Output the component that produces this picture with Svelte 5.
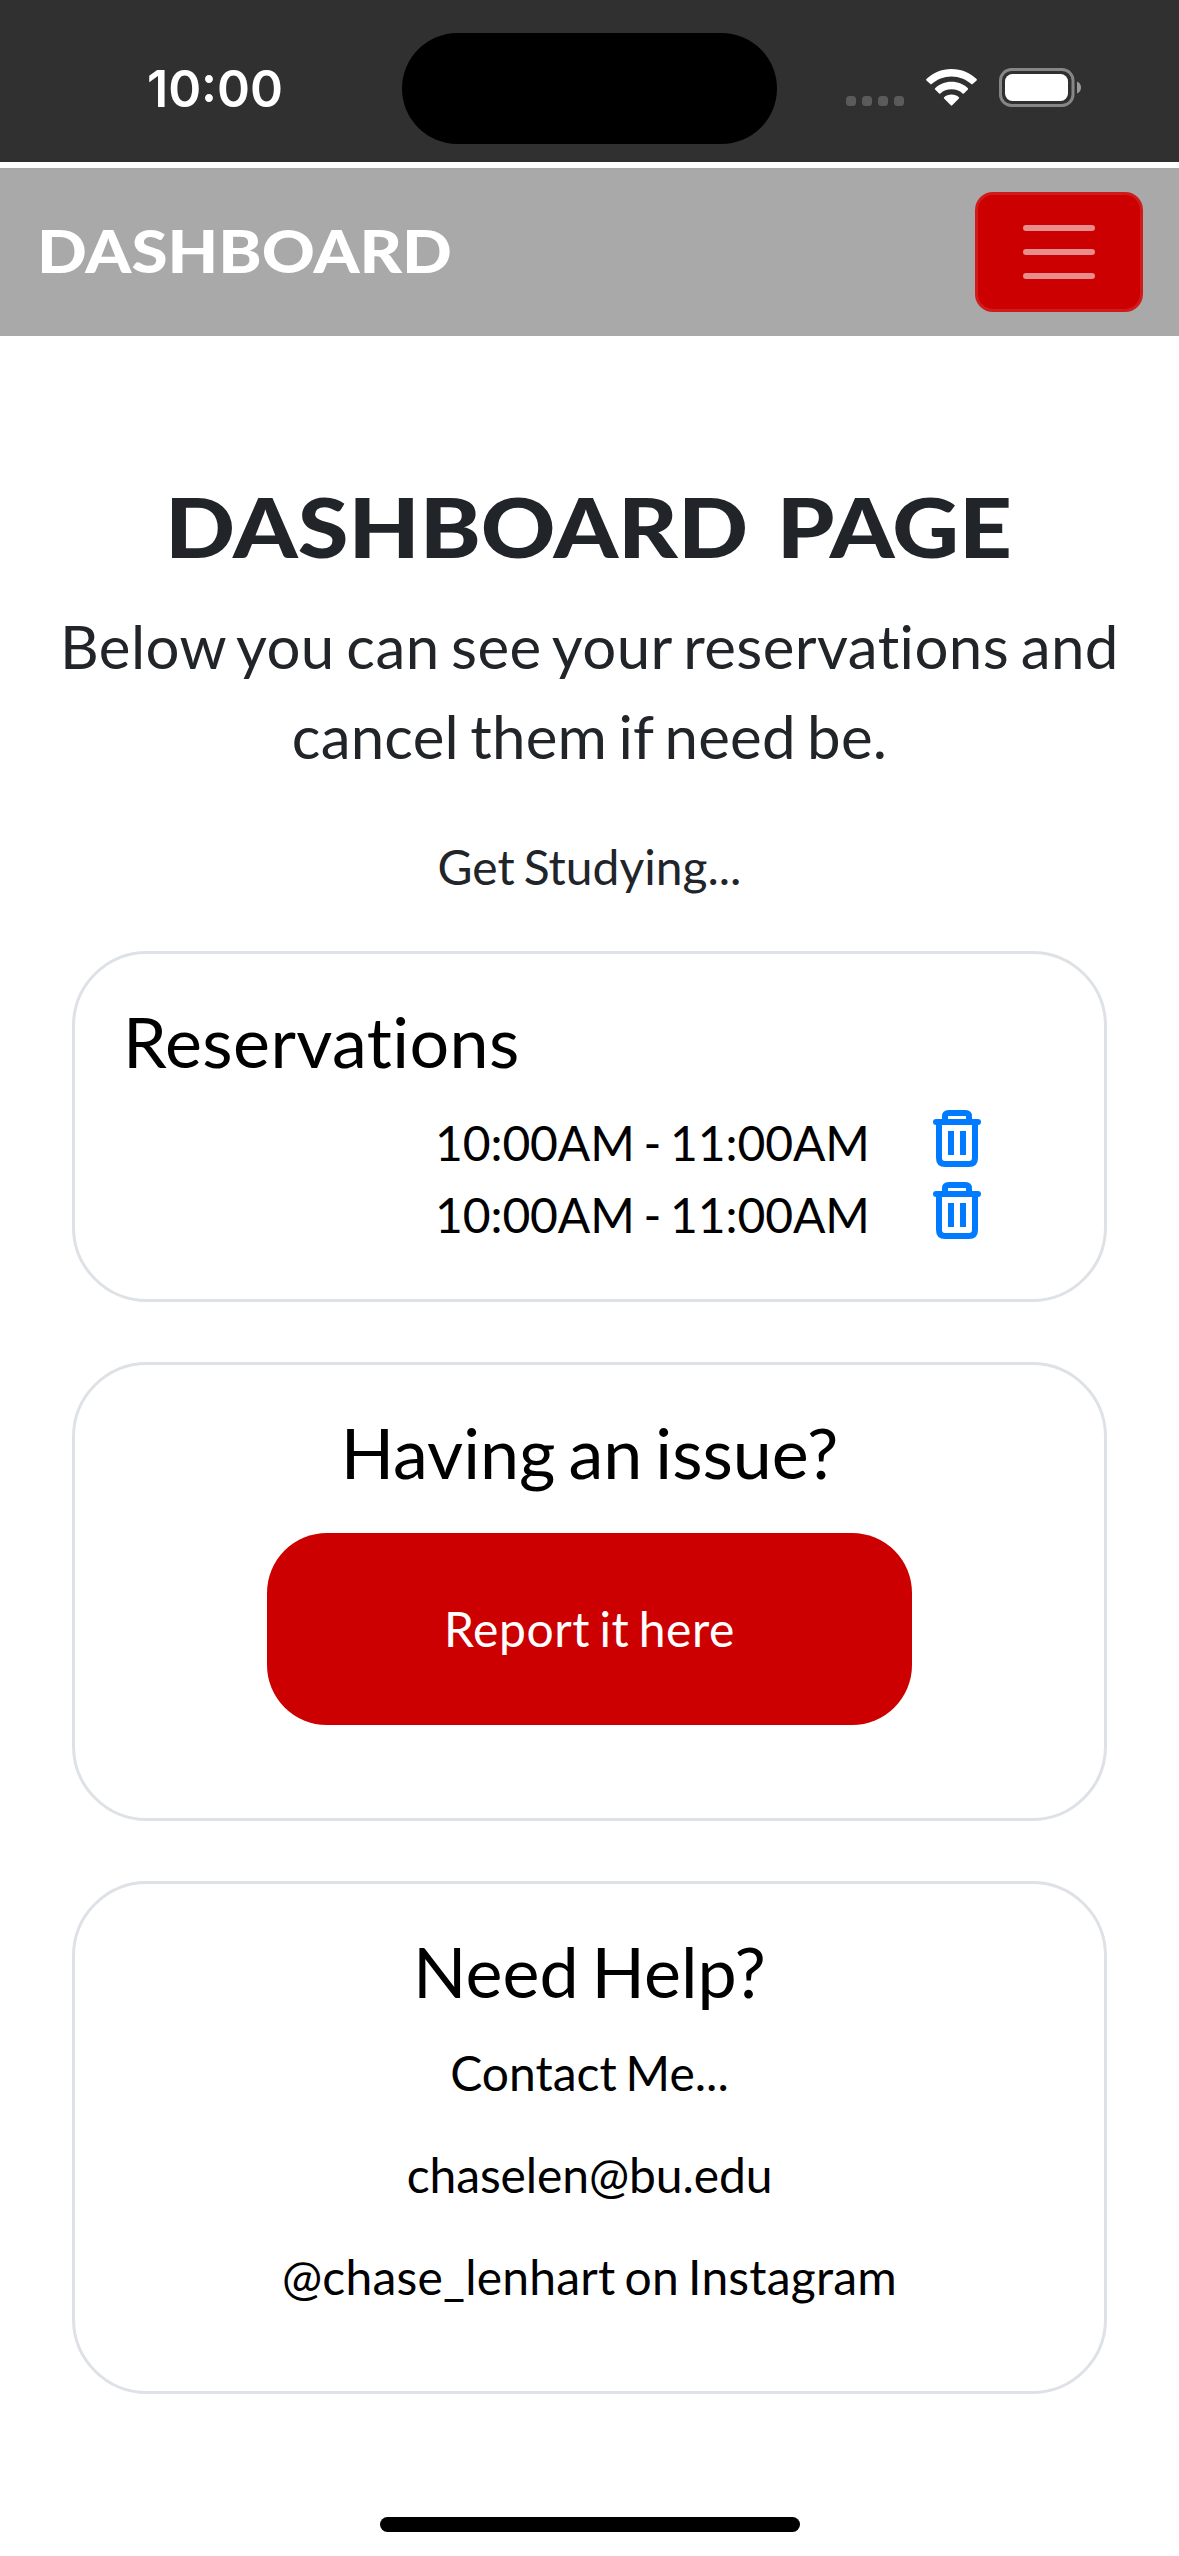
<script>
  const reservations = ['10:00AM - 11:00AM', '10:00AM - 11:00AM'];
  const contacts = [
    { text: 'Contact Me...', kind: 'note' },
    { text: 'chaselen@bu.edu', kind: 'email' },
    { text: '@chase_lenhart on Instagram', kind: 'social' },
  ];
</script>

<div class="screen">
  <header class="status">
    <span class="time">
      <svg width="134" height="60" viewBox="0 0 134 60">
        <text class="clock" x="-1" y="48.500" textLength="136" lengthAdjust="spacingAndGlyphs">10:00</text>
      </svg>
    </span>
    <div class="island"></div>
    <div class="indicators">
      <div class="dots"><i></i><i></i><i></i><i></i></div>
      <svg class="wifi" width="51" height="37" viewBox="0 0 51 37">
        <path d="M25.5 0C35.5 0 44.5 4 50.6 10.1Q51.2 10.8 50.6 11.4L46.6 15.1Q46 15.7 45.4 15.1C40 10.2 33 7.4 25.5 7.4S11 10.2 5.6 15.1Q5 15.7 4.4 15.1L.4 11.4Q-.2 10.8.4 10.1C6.500 4 15.500 0 25.500 0Z" />
        <path d="M25.500 12.800C32 12.800 37.800 15.300 41.900 19.200Q42.500 19.900 41.900 20.500L37.900 24.400Q37.300 25 36.600 24.400C33.600 21.800 29.800 20.300 25.500 20.300S17.400 21.800 14.400 24.400Q13.700 25 13.100 24.400L9.100 20.500Q8.500 19.900 9.100 19.200C13.200 15.300 19 12.800 25.500 12.800Z" />
        <path d="M25.500 25.600C28.400 25.600 31 26.600 32.900 28.300Q33.500 28.900 32.900 29.500L26.200 36.300Q25.500 37 24.800 36.300L18.100 29.500Q17.500 28.900 18.100 28.300C20 26.600 22.600 25.600 25.500 25.600Z" />
      </svg>
      <svg class="battery" width="83" height="39" viewBox="0 0 83 39">
        <rect x="1.500" y="1.500" width="72.500" height="36" rx="11" fill="none" stroke="#868686" stroke-width="3" />
        <rect x="6" y="6" width="63" height="27" rx="7.500" fill="#fff" />
        <path d="M78 13.500C80.500 14.500 82 16.700 82 19.500S80.500 24.500 78 25.500Z" fill="#9a9a9a" />
      </svg>
    </div>
  </header>

  <nav>
    <svg width="412" height="60" viewBox="0 0 412 60">
      <text class="brand" x="-4" y="51" textLength="415" lengthAdjust="spacingAndGlyphs">DASHBOARD</text>
    </svg>
    <button class="toggler" aria-label="Toggle navigation"><i></i><i></i><i></i></button>
  </nav>

  <main>
    <h1>
      <svg width="840" height="100" viewBox="0 0 840 100">
        <text class="title" x="-5" y="83" textLength="847" lengthAdjust="spacingAndGlyphs">DASHBOARD PAGE</text>
      </svg>
    </h1>
    <p class="lead"><span class="wide">Below you can see your reservations and</span><br />cancel them if need be.</p>
    <p class="tagline">Get Studying...</p>

    <section class="card first">
      <h2 class="left">Reservations</h2>
      <ul>
        {#each reservations as slot}
          <li>
            <span>{slot}</span>
            <svg width="48" height="57" viewBox="0 0 48 57" fill="none" stroke="#007bff" stroke-width="6">
              <path d="M12 12V6.500Q12 3 15.500 3H32.500Q36 3 36 6.500V12" />
              <path d="M3 12H45" stroke-linecap="round" />
              <path d="M6 12V48Q6 54 12 54H36Q42 54 42 48V12" />
              <path d="M18 21V45M30 21V45" />
            </svg>
          </li>
        {/each}
      </ul>
    </section>

    <section class="card second">
      <h2>Having an issue?</h2>
      <button class="report">Report it here</button>
    </section>

    <section class="card third">
      <h2>Need Help?</h2>
      {#each contacts as line}
        <p class={line.kind}>{line.text}</p>
      {/each}
    </section>
  </main>

  <div class="home"></div>
</div>

<style>
  :global(body) {
    margin: 0;
    background: #fff;
  }
  .screen {
    box-sizing: border-box;
    width: 1179px;
    height: 2556px;
    display: flex;
    flex-direction: column;
    overflow: hidden;
    background: #fff;
    color: #212529;
    font-family: Lato, 'Liberation Sans', sans-serif;
    font-size: 48px;
    line-height: 72px;
    font-variant-ligatures: none;
  }
  svg {
    display: block;
    overflow: visible;
    flex: none;
  }
  h1, h2, p, ul {
    margin: 0;
    padding: 0;
    font-weight: 400;
  }
  button {
    font: inherit;
    padding: 0;
    box-sizing: border-box;
  }
  h2, p, li, .report {
    word-spacing: -0.07em;
  }
  .status {
    box-sizing: border-box;
    height: 162px;
    padding: 33px 97px 0 148px;
    background: #303030;
    display: flex;
    align-items: flex-start;
    flex: none;
  }
  .time {
    width: 254px;
    padding-top: 25px;
  }
  .clock {
    font: 600 51px Inter, sans-serif;
    fill: #fff;
  }
  .island {
    width: 375px;
    height: 111px;
    border-radius: 56px;
    background: #000;
  }
  .indicators {
    display: flex;
    flex: 1;
    padding: 35px 0 0 69px;
  }
  .dots {
    display: flex;
    gap: 6px;
    padding-top: 28px;
    width: 80px;
  }
  .dots i {
    width: 10px;
    height: 10px;
    border-radius: 3.500px;
    background: #5b5b5b;
  }
  .wifi {
    fill: #fff;
    margin: 1px 22px 0 0;
  }
  nav {
    box-sizing: border-box;
    height: 168px;
    margin-top: 6px;
    padding: 0 36px 0 41px;
    background: #a9a9a9;
    display: flex;
    align-items: center;
    justify-content: space-between;
    flex: none;
  }
  .brand {
    font: 900 58.500px Lato, sans-serif;
    fill: #fff;
  }
  .toggler {
    width: 168px;
    height: 120px;
    border: 3px solid rgba(255, 255, 255, 0.1);
    border-radius: 18px;
    background: #c00;
    display: flex;
    flex-direction: column;
    align-items: center;
    justify-content: center;
    gap: 18px;
  }
  .toggler i {
    width: 72px;
    height: 6px;
    border-radius: 3px;
    background: #e88c8c;
  }
  main {
    display: flex;
    flex-direction: column;
    align-items: center;
    padding-top: 139px;
  }
  .title {
    font: 900 82px Lato, sans-serif;
    word-spacing: 6px;
    fill: #212529;
  }
  .lead {
    margin-top: 26px;
    font-size: 60px;
    line-height: 90px;
    letter-spacing: 0.2px;
    text-align: center;
  }
  .wide {
    letter-spacing: 0.42px;
  }
  .tagline {
    margin-top: 50px;
  }
  .card {
    box-sizing: border-box;
    width: 1035px;
    padding: 45px 48px 0;
    border: 3px solid #dee2e6;
    border-radius: 75px;
    color: #000;
    text-align: center;
  }
  .first {
    height: 351px;
    margin-top: 48px;
  }
  .second {
    height: 459px;
    margin-top: 60px;
  }
  .third {
    height: 513px;
    margin-top: 60px;
  }
  h2 {
    font-size: 70px;
    line-height: 84px;
  }
  .left {
    text-align: left;
    letter-spacing: 0.4px;
  }
  ul {
    list-style: none;
    margin-top: 24px;
    padding-left: 312px;
  }
  li {
    display: flex;
    height: 72px;
  }
  li span {
    width: 498px;
    letter-spacing: -0.1px;
    text-align: left;
  }
  li svg {
    margin-top: 3px;
  }
  .report {
    width: 645px;
    height: 192px;
    margin-top: 39px;
    border: 0;
    border-radius: 60px;
    background: #c00;
    color: #fff;
    letter-spacing: 0.55px;
  }
  .third p {
    margin-top: 30px;
  }
  .third h2 + p {
    margin-top: 24px;
  }
  .email {
    letter-spacing: -0.1px;
  }
  .social {
    letter-spacing: 0.2px;
  }
  .home {
    width: 420px;
    height: 15px;
    margin: auto auto 24px;
    border-radius: 8px;
    background: #000;
  }
</style>
